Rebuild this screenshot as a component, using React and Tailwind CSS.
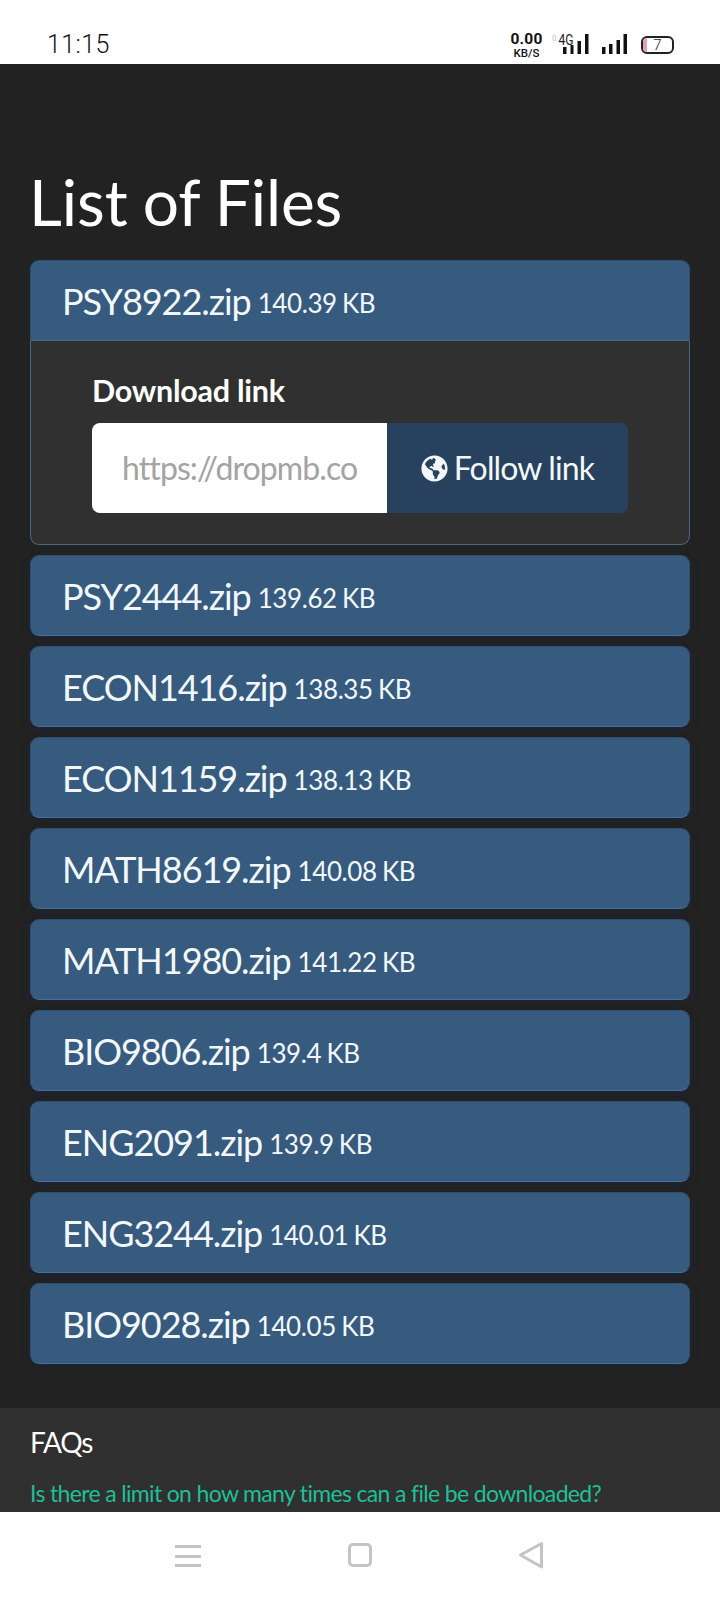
import React from "react";
import { FaGlobeAmericas } from "react-icons/fa";

const files = [
  ["PSY2444.zip", "139.62 KB"],
  ["ECON1416.zip", "138.35 KB"],
  ["ECON1159.zip", "138.13 KB"],
  ["MATH8619.zip", "140.08 KB"],
  ["MATH1980.zip", "141.22 KB"],
  ["BIO9806.zip", "139.4 KB"],
  ["ENG2091.zip", "139.9 KB"],
  ["ENG3244.zip", "140.01 KB"],
  ["BIO9028.zip", "140.05 KB"],
];

function Header({ name, size, open }) {
  return (
    <div className={`h-[81px] flex items-center pl-[31px] bg-[#375a7f] border border-[#2f4f72] text-white ${open ? "rounded-t-[9px] border-b-[#44698f]" : "rounded-[9px] border-b-[#44709b] shadow-[0_3px_6px_rgba(28,36,56,0.7)]"}`}>
      <span className="text-[36px] leading-none tracking-[-1.05px] text-[#f2f8fa]">{name}</span>
      <span className="text-[26px] leading-none ml-[7px] mt-[4px] tracking-[-0.4px] [word-spacing:-1px] text-[#f2f8fa]">{size}</span>
    </div>
  );
}

function StatusIcons() {
  return (
    <div className="flex items-start h-[24px]">
      <div className="flex flex-col items-center w-[31px] text-[#111] font-['Roboto',sans-serif]">
        <span className="text-[15.5px] font-bold leading-[13px] tracking-[0.2px]">0.00</span>
        <span className="text-[11.5px] font-medium leading-[10px] mt-[2px]">KB/S</span>
      </div>
      <svg width="38" height="22" viewBox="0 0 38 22" className="ml-[10px]">
        <rect x="1" y="2" width="2.5" height="6" rx="1.2" fill="none" stroke="#ccc" strokeWidth="1" />
        <text x="6.5" y="12" fontSize="14" textLength="15" lengthAdjust="spacingAndGlyphs" fontFamily="Roboto, sans-serif" fill="#222">4G</text>
        <rect x="11" y="14" width="3.5" height="7" fill="#111" />
        <rect x="18.5" y="12" width="3" height="9" fill="#111" />
        <rect x="25.5" y="8" width="3.5" height="13" fill="#111" />
        <rect x="33" y="1" width="3.5" height="20" fill="#111" />
      </svg>
      <svg width="27" height="22" viewBox="0 0 27 22" className="ml-[11px]">
        <rect x="1" y="14" width="3.5" height="7" fill="#111" />
        <rect x="8" y="11" width="3.5" height="10" fill="#111" />
        <rect x="15.5" y="7" width="3.5" height="14" fill="#111" />
        <rect x="22.5" y="1" width="3.5" height="20" fill="#111" />
      </svg>
      <div className="relative ml-[13px] mt-[3px] w-[33px] h-[18px] border-2 border-[#222] rounded-[6px] flex items-center justify-center text-[15px] leading-none text-[#222] font-['Roboto',sans-serif] font-light overflow-hidden">
        <span className="absolute left-0 top-0 bottom-0 w-[4px] bg-[#e3a3aa]" />
        7
      </div>
    </div>
  );
}

export default function App() {
  return (
    <div className="w-[720px] h-[1600px] overflow-hidden flex flex-col bg-white font-['Lato','Open_Sans',sans-serif]">
      <div className="h-[64px] shrink-0 bg-white flex items-end justify-between pl-[47px] pr-[46px] pb-[7px]">
        <span className="font-['Roboto',sans-serif] font-light text-[25px] leading-[28px] tracking-[0.4px] text-[#111] mb-[-2px]">11:15</span>
        <StatusIcons />
      </div>

      <div className="h-[1448px] shrink-0 overflow-hidden bg-[#222222] flex flex-col">
        <div className="px-[30px] flex flex-col">
          <h1 className="text-[64px] leading-[74px] text-white font-normal mt-[101px] mb-[21px] ml-[-1px] tracking-[-0.1px] [word-spacing:-1px]">List of Files</h1>
          <div className="flex flex-col gap-[10px]">
            <div>
              <Header name="PSY8922.zip" size="140.39 KB" open />
              <div className="h-[204px] bg-[#303030] border border-t-0 border-[#46698b] rounded-b-[9px] px-[61px] pt-[31px]">
                <div className="text-[30.5px] leading-[36px] font-bold text-white tracking-[-0.25px]">Download link</div>
                <div className="flex h-[90px] mt-[15px] w-[536px]">
                  <div className="w-[295px] bg-white rounded-l-[8px] flex items-center pl-[30px] text-[32px] leading-none tracking-[-0.9px] text-[#a3a3a3] overflow-hidden whitespace-nowrap">https://dropmb.co</div>
                  <div className="w-[241px] bg-[#27415e] rounded-r-[8px] flex items-center justify-center gap-[6px] text-[#f2f8fa] text-[32px] leading-none tracking-[-0.85px]">
                    <FaGlobeAmericas className="text-[27px]" />
                    <span>Follow link</span>
                  </div>
                </div>
              </div>
            </div>
            {files.map(([n, s]) => (
              <Header key={n} name={n} size={s} />
            ))}
          </div>
        </div>
        <div className="mt-[44px] flex-1 bg-[#303030] px-[30px] pt-[17px]">
          <div className="text-[28px] leading-[34px] text-white tracking-[-1.2px]">FAQs</div>
          <div className="text-[23px] leading-[28px] text-[#1fbf97] mt-[20px] whitespace-nowrap tracking-[-0.66px]">Is there a limit on how many times can a file be downloaded?</div>
        </div>
      </div>

      <div className="h-[88px] shrink-0 bg-white flex items-start pt-[31px]">
        <div className="ml-[175px] w-[26px] h-[26px] flex flex-col justify-between py-[2px]">
          <div className="h-[3px] bg-[#c4c4c4]" />
          <div className="h-[3px] bg-[#c4c4c4]" />
          <div className="h-[3px] bg-[#c4c4c4]" />
        </div>
        <div className="ml-[147px] w-[24px] h-[24px] border-[3px] border-[#c4c4c4] rounded-[5px]" />
        <svg width="26" height="28" viewBox="0 0 26 28" className="ml-[146px] -mt-[2px]">
          <path d="M23.5 2.5 L2.5 14 L23.5 26 Z" fill="none" stroke="#c4c4c4" strokeWidth="3" strokeLinejoin="round" />
        </svg>
      </div>
    </div>
  );
}
